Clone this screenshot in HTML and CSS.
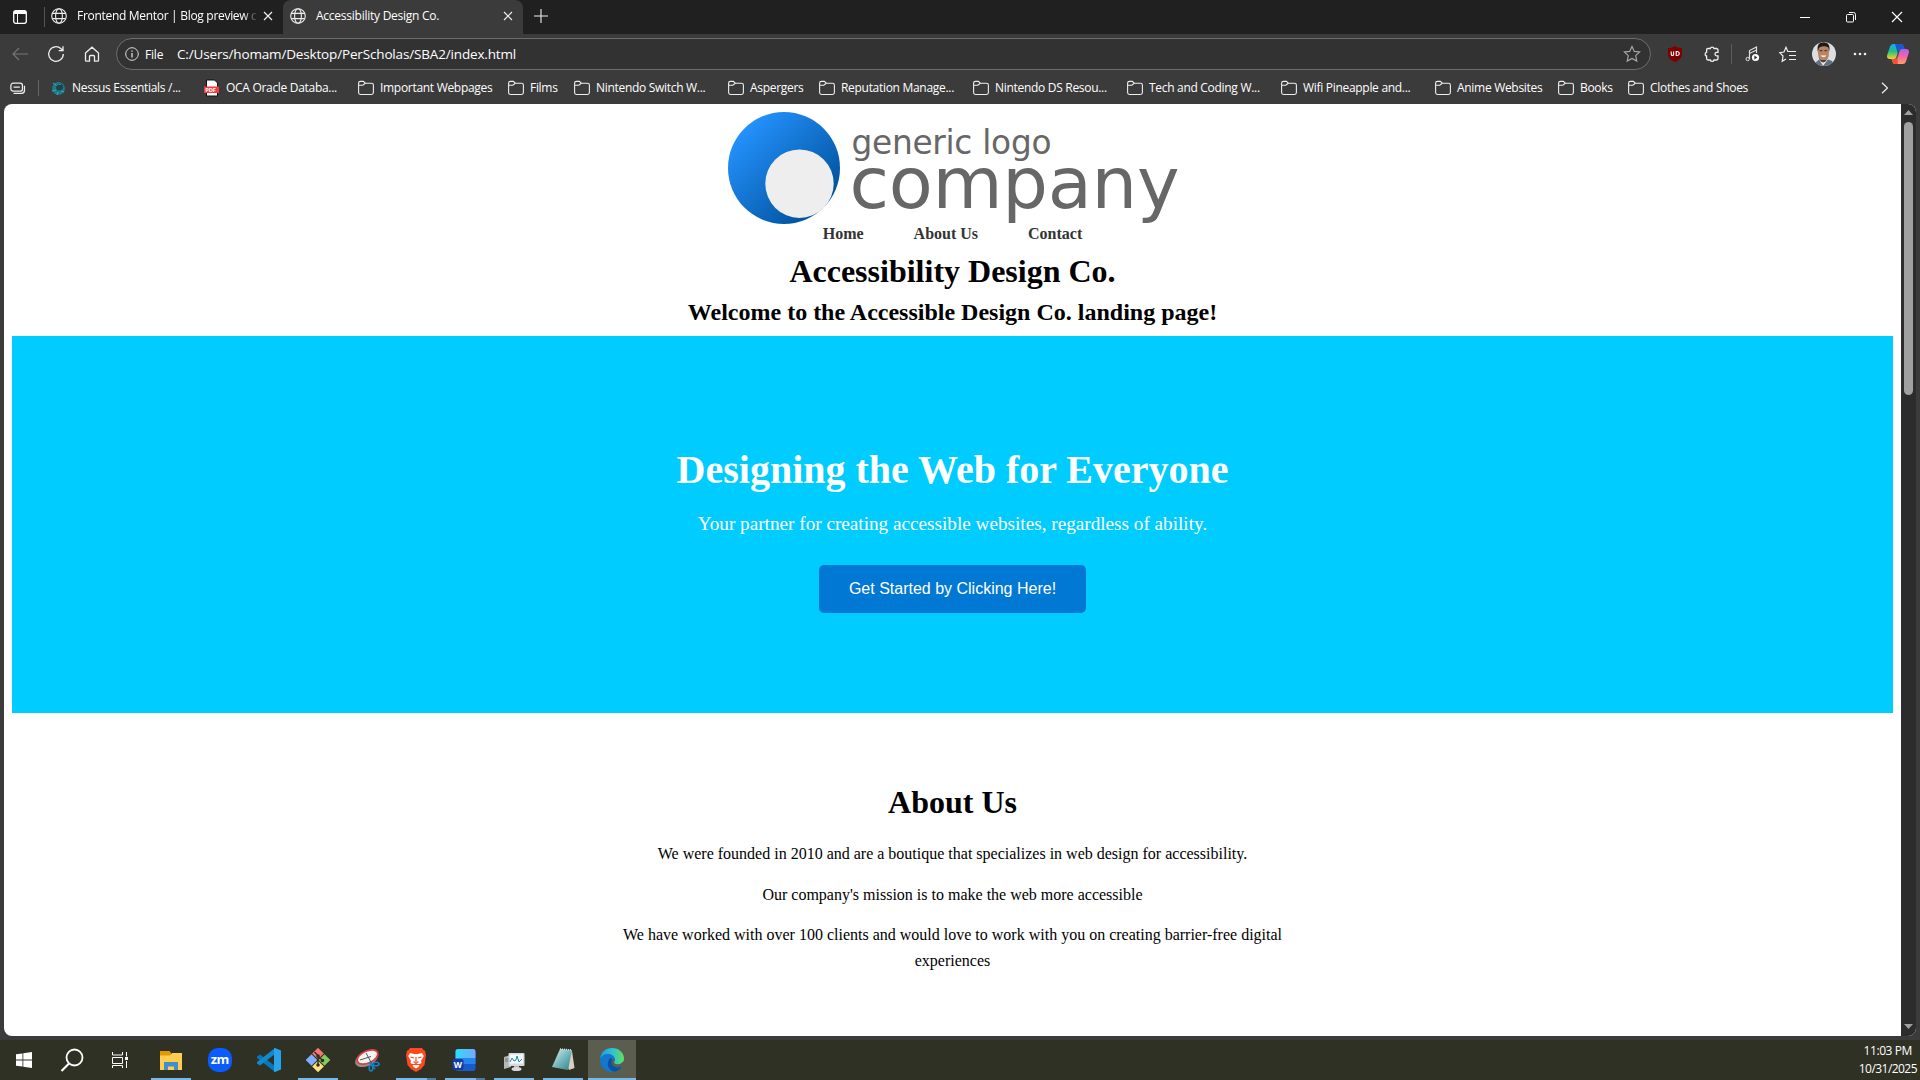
FILE: index.html
```html
<!DOCTYPE html>
<html lang="en">
<head>
<meta charset="utf-8">
<title>Accessibility Design Co.</title>
<link rel="stylesheet" href="styles.css">
</head>
<body>
<svg class="defs" width="0" height="0" aria-hidden="true">
  <symbol id="globe" viewBox="0 0 16 16"><g fill="none" stroke="#eee" stroke-width="1.1"><circle cx="8" cy="8" r="7.3"/><ellipse cx="8" cy="8" rx="3.4" ry="7.3"/><path d="M1.4 5.4h13.2M1.4 10.6h13.2"/></g></symbol>
  <symbol id="close" viewBox="0 0 10 10"><path d="M1 1l8 8M9 1l-8 8" stroke="#eee" stroke-width="1.2"/></symbol>
  <symbol id="folder" viewBox="0 0 16 16"><path d="M.6 3.2a1.8 1.8 0 0 1 1.8-1.8h3l1.9 1.8h6.200a1.900 1.900 0 0 1 1.900 1.900v7.500a1.900 1.900 0 0 1-1.900 1.900H2.500a1.900 1.900 0 0 1-1.900-1.900zM.6 5.200h4.200l2.500-2" fill="none" stroke="#eee" stroke-width="1.100"/></symbol>
</svg>
<div class="window">
  <header class="tabstrip">
    <div class="tab-actions"><svg width="14" height="14" viewBox="0 0 14 14"><rect x=".7" y=".7" width="12.600" height="12.600" rx="2" fill="none" stroke="#fff" stroke-width="1.300"/><path d="M1 1h12v3H1z" fill="#fff"/><path d="M4.500 4v9" stroke="#fff"/></svg></div>
    <div class="tab"><svg width="16" height="16"><use href="#globe"/></svg><span class="tab-title faded">Frontend Mentor | Blog preview c</span><svg width="10" height="10"><use href="#close"/></svg></div>
    <div class="tab active"><svg width="16" height="16"><use href="#globe"/></svg><span class="tab-title">Accessibility Design Co.</span><svg width="10" height="10"><use href="#close"/></svg></div>
    <div class="new-tab"><svg width="14" height="14" viewBox="0 0 14 14"><path d="M7 0v14M0 7h14" stroke="#eee" stroke-width="1.100"/></svg></div>
    <div class="window-buttons">
      <span><svg width="12" height="12"><path d="M1 6.500h10" stroke="#fff"/></svg></span>
      <span><svg width="12" height="12" fill="none" stroke="#fff"><rect x="1.500" y="3.500" width="7" height="7.500" rx="1"/><path d="M4 1.500h4.500a2 2 0 0 1 2 2V9"/></svg></span>
      <span><svg width="12" height="12"><path d="M1 1l10 10M11 1L1 11" stroke="#fff" stroke-width="1.200"/></svg></span>
    </div>
  </header>
  <div class="toolbar">
    <div class="nav-buttons">
      <span><svg width="16" height="14" fill="none" stroke="#777" stroke-width="1.100"><path d="M16 7H1M7 1L1 7l6 6"/></svg></span>
      <span><svg width="18" height="18" fill="none" stroke="#eee" stroke-width="1.300"><path d="M16.300 9A7.300 7.300 0 1 1 14 3.700L16 5.600M16 1.300v4.400h-4.300"/></svg></span>
      <span><svg width="16" height="16" fill="none" stroke="#eee" stroke-width="1.300"><path d="M1.500 7L8 1.200 14.500 7v7.200a.9.9 0 0 1-.9.900H10.500V10.500a1 1 0 0 0-1-1h-3a1 1 0 0 0-1 1V15.100H2.400a.9.9 0 0 1-.9-.9z"/></svg></span>
    </div>
    <div class="omnibox">
      <svg width="14" height="14" fill="none" stroke="#ddd"><circle cx="7" cy="7" r="6.300"/><path d="M7 6v4.500M7 3.500v1.300" stroke-width="1.300"/></svg>
      <span class="scheme">File</span>
      <span class="url">C:/Users/homam/Desktop/PerScholas/SBA2/index.html</span>
      <svg class="fav" width="18" height="18" viewBox="0 0 18 18" fill="none" stroke="#aaa" stroke-width="1.100"><path d="M9 1.400l2.300 5 5.400.6-4 3.700 1.100 5.400L9 13.400l-4.800 2.700 1.100-5.400-4-3.700 5.400-.6z"/></svg>
    </div>
    <div class="extensions">
      <span class="e-shield"><svg width="14" height="16"><path d="M7 0c2 1.500 4.500 2 7 2v6c0 4-3 6.500-7 8-4-1.500-7-4-7-8V2c2.500 0 5-.5 7-2z" fill="#800000"/><path d="M3.200 5.500v2.700q0 1.300 1.200 1.300t1.200-1.300V5.500M8.200 5.500v4q3 .3 3-2t-3-2z" fill="none" stroke="#fff" stroke-width="1.100"/></svg></span>
      <span class="e-puzzle"><svg width="16" height="18" fill="none" stroke="#eee" stroke-width="1.300"><path d="M4 3.500h2.300a1.900 1.900 0 0 1 3.700 0h2.500a1.500 1.500 0 0 1 1.500 1.500v2.300h-1.200a1.800 1.800 0 0 0 0 3.600H14v2.600a1.500 1.500 0 0 1-1.500 1.500H10a1.900 1.900 0 0 1-3.700 0H4A1.500 1.500 0 0 1 2.600 13.500V11a1.900 1.900 0 0 1 0-3.700V5A1.500 1.500 0 0 1 4 3.500z"/></svg></span>
      <span class="e-music"><svg width="15" height="16"><path d="M4.500 13V4.500L11.500 1v6M4.500 7.500l7-3.500" fill="none" stroke="#ddd" stroke-width="1.200"/><circle cx="2.700" cy="13" r="1.700" fill="none" stroke="#ddd"/><circle cx="10.500" cy="11.500" r="3.600" fill="#fff"/><path d="M9.400 9.500v4l3-2z" fill="#333"/></svg></span>
      <span class="e-list"><svg width="18" height="17" fill="none" stroke="#eee" stroke-width="1.200"><path d="M11 5.500H8.800L7 1.300 5 6l-4.200.6L4 10l-.8 5.300L7 13M11 5.500h6M10 9.500h7M10 13.500h7"/></svg></span>
      <span class="e-avatar"><svg width="24" height="24"><defs><clipPath id="face"><circle cx="12" cy="12" r="12"/></clipPath></defs><g clip-path="url(#face)"><path d="M0 0h24v24H0z" fill="#dcdee1"/><path d="M2 24l2-4 4-3h7l5 2 3 5z" fill="#60707f"/><path d="M7 17l4 7 6-8z" fill="#dbe8f2"/><path d="M5.800 9Q6 2 11.500 2T17 9q.3 5-1.500 8t-4.300 3q-2.700-.3-4-3.500T5.800 9z" fill="#b98366"/><path d="M5.800 9.500C4.800 3 7 .3 11.500.3S18.500 3 17.200 9.500L16.300 5.500Q12 3 7 5.700z" fill="#211b18"/><path d="M7.700 8.700h2.600M12.500 8.700h2.600" stroke="#3b261d"/><path d="M6.200 12.500q.8 7 5 8 4-.8 5.300-8-.8 5-2.500 5.500h-5q-2-1-2.800-5.500z" fill="#5c3b2d"/><path d="M8.500 13.500q3 3.500 6 0z" fill="#fff"/></g></svg></span>
      <span class="e-dots"><svg width="14" height="4" fill="#eee"><circle cx="2" cy="2" r="1.300"/><circle cx="7" cy="2" r="1.300"/><circle cx="12" cy="2" r="1.300"/></svg></span>
      <span class="e-copilot"><svg width="22" height="20" viewBox="0 0 22 20"><defs><linearGradient id="cpa" x1="0" y1="0" x2="0" y2="1"><stop offset="0" stop-color="#17a8f5"/><stop offset=".5" stop-color="#22bf86"/><stop offset="1" stop-color="#f7d51d"/></linearGradient><linearGradient id="cpb" x1="0" y1="0" x2="0" y2="1"><stop offset="0" stop-color="#b25df0"/><stop offset=".5" stop-color="#f366a7"/><stop offset="1" stop-color="#ffa05c"/></linearGradient></defs><path d="M6 0h8q2 0 2.700 2.500L17.500 5H14q-2 0-2.700 2L9.500 13Q8.700 15 7 15H3Q-.8 15 .2 11L3 2.500Q4 0 6 0z" fill="url(#cpa)"/><path d="M8 0h6q2 0 2.700 2.500L17.500 5H14q-2 0-2.700 2L10.700 9z" fill="#1857cf"/><path d="M16 20H8q-2 0-2.700-2.500L4.500 15H8q2 0 2.700-2L12.500 7Q13.300 5 15 5h4q3.800 0 2.800 4L19 17.500Q18 20 16 20z" fill="url(#cpb)"/><path d="M4.500 15H8q2 0 2.700-2v7H8q-2 0-2.700-2.500z" fill="#f2503d"/></svg></span>
    </div>
  </div>
  <nav class="bookmarks">
    <div class="collapse"><svg width="16" height="13" viewBox="0 0 18 14" fill="none" stroke="#eee" stroke-width="1.400"><rect x="1" y="1" width="13" height="9" rx="2.500"/><path d="M4 5.500h7M4 12.500h9q3.300 0 3.300-3.500V4"/></svg></div>
    <a class="b-nessus"><svg width="15" height="16"><circle cx="7.500" cy="8.500" r="6.500" fill="#187c8b"/><circle cx="8.500" cy="7" r="3.500" fill="#24404a"/><path d="M2 3l3 2M1 11l4-1M6 15l1-3M13 12l-3-1" stroke="#44a7af"/><path d="M5 6q2-3 5-1.500" fill="none" stroke="#2a96a2"/></svg>Nessus Essentials /...</a>
    <a class="b-oca"><svg width="15" height="16"><path d="M2.500 0h8l3 3v13h-11z" fill="#fff" stroke="#111"/><path d="M0 6.500h15v6.500H0z" fill="#f13d3d"/><text x="1.300" y="12" font-size="5.800" font-weight="700" fill="#fff">PDF</text></svg>OCA Oracle Databa...</a>
    <a class="b-important"><svg width="16" height="16"><use href="#folder"/></svg>Important Webpages</a>
    <a class="b-films"><svg width="16" height="16"><use href="#folder"/></svg>Films</a>
    <a class="b-switch"><svg width="16" height="16"><use href="#folder"/></svg>Nintendo Switch W...</a>
    <a class="b-asp"><svg width="16" height="16"><use href="#folder"/></svg>Aspergers</a>
    <a class="b-rep"><svg width="16" height="16"><use href="#folder"/></svg>Reputation Manage...</a>
    <a class="b-ds"><svg width="16" height="16"><use href="#folder"/></svg>Nintendo DS Resou...</a>
    <a class="b-tech"><svg width="16" height="16"><use href="#folder"/></svg>Tech and Coding W...</a>
    <a class="b-wifi"><svg width="16" height="16"><use href="#folder"/></svg>Wifi Pineapple and...</a>
    <a class="b-anime"><svg width="16" height="16"><use href="#folder"/></svg>Anime Websites</a>
    <a class="b-books"><svg width="16" height="16"><use href="#folder"/></svg>Books</a>
    <a class="b-clothes"><svg width="16" height="16"><use href="#folder"/></svg>Clothes and Shoes</a>
    <div class="more"><svg width="8" height="12" fill="none" stroke="#eee" stroke-width="1.200"><path d="M1 .7L6.500 6 1 11.300"/></svg></div>
  </nav>
  <div class="viewport">
    <main class="page">
      <div class="logo">
        <svg width="450" height="116" viewBox="0 0 450 116"><defs><linearGradient id="disc" x1=".15" y1=".15" x2=".85" y2=".85"><stop offset="0" stop-color="#2491fc"/><stop offset="1" stop-color="#00529c"/></linearGradient></defs><circle cx="56" cy="56" r="56" fill="url(#disc)"/><circle cx="71.500" cy="71.700" r="34.200" fill="#eee"/><text x="123.500" y="41.700" font-size="32.800" textLength="200">generic logo</text><text x="121.500" y="95.500" font-size="72" textLength="330">company</text></svg>
      </div>
      <nav class="site-nav"><a>Home</a><a>About Us</a><a>Contact</a></nav>
      <h1>Accessibility Design Co.</h1>
      <h2>Welcome to the Accessible Design Co. landing page!</h2>
      <section class="hero">
        <h1>Designing the Web for Everyone</h1>
        <p>Your partner for creating accessible websites, regardless of ability.</p>
        <button>Get Started by Clicking Here!</button>
      </section>
      <section class="about">
        <h2>About Us</h2>
        <p>We were founded in 2010 and are a boutique that specializes in web design for accessibility.</p>
        <p>Our company's mission is to make the web more accessible</p>
        <p>We have worked with over 100 clients and would love to work with you on creating barrier-free digital experiences</p>
      </section>
    </main>
    <div class="scrollbar"><svg width="9" height="6"><path d="M0 5L4.500 0 9 5z" fill="#a0a0a0"/></svg><div class="thumb"></div><svg class="down" width="9" height="6"><path d="M0 0L4.500 5 9 0z" fill="#a0a0a0"/></svg></div>
  </div>
</div>
<footer class="taskbar">
  <div class="system-icons">
    <span><svg width="16" height="16" fill="#fff"><path d="M0 2.300L6.500 1.400v6.200H0zM7.300 1.300L16 0v7.600H7.300zM0 8.400h6.500v6.200L0 13.700zM7.300 8.400H16V16l-8.700-1.300z"/></svg></span>
    <span><svg width="24" height="24" fill="none" stroke="#fff" stroke-width="1.800"><circle cx="14.500" cy="9.500" r="8"/><path d="M9 15.500L1.500 23" stroke-width="2.200"/></svg></span>
    <span><svg width="16" height="16" fill="none" stroke="#fff"><path d="M.5 0v3h10V0M.5 5.500h10v6H.5zM.5 16v-2.500h10V16M14.500 0v4.500M14.500 9v7"/><path d="M13 5h3v3h-3z" fill="#fff" stroke="none"/></svg></span>
  </div>
  <div class="apps">
    <span class="open"><svg width="24" height="24"><path d="M1 3h9.500L12 5v6H1z" fill="#e09a00"/><path d="M1 7.500h10L13 5h10v17H1z" fill="#ffce50"/><path d="M5 22v-8h14v8h-4v-3.500H9V22z" fill="#3e8ed0"/></svg></span>
    <span><svg width="24" height="24"><rect width="24" height="24" rx="10" fill="#0b5cff"/><text class="zm" x="2.800" y="16" font-size="13" font-weight="700" textLength="18.500" fill="#fff">zm</text></svg></span>
    <span><svg width="24" height="24"><path d="M0 8.500l3-2L18 18v6L0 10z" fill="#0878bd"/><path d="M0 15.500l3 2L18 6V0L0 14z" fill="#118acb"/><path d="M18 0l6 2.500v19L18 24l-1-.5V.5z" fill="#28a4ed"/></svg></span>
    <span class="open"><svg width="24" height="24"><g transform="rotate(45 12 12)"><path d="M3.300 3.300h8.200v8.200H3.300z" fill="#f67575"/><path d="M12.500 3.300h8.200v8.200h-8.200z" fill="#80cc5c"/><path d="M3.300 12.500h8.200v8.200H3.300z" fill="#80b0ff"/><path d="M12.500 12.500h8.200v8.200h-8.200z" fill="#ffe27b"/></g><path d="M8.500 4l3.500 3.500v9M12 8l4.500 4.500" fill="none" stroke="#352a24" stroke-width="1.400"/><g fill="#352a24"><circle cx="12" cy="8" r="1.800"/><circle cx="16.500" cy="12.500" r="1.800"/><circle cx="12" cy="17" r="1.800"/></g></svg></span>
    <span><svg width="24" height="24"><ellipse cx="11.500" cy="11" rx="12" ry="7" transform="rotate(-24 11.500 11)" fill="#938e8a"/><ellipse cx="12.500" cy="9" rx="11" ry="6" transform="rotate(-24 12.500 9)" fill="#f6f4f3" stroke="#dc3c42" stroke-width="1.700"/><path d="M5 12l11-3.500M11 5l6 11" stroke="#555"/><g fill="none" stroke="#1683c6" stroke-width="1.600"><ellipse cx="21" cy="16" rx="3" ry="1.800"/><ellipse cx="16" cy="20" rx="1.800" ry="3"/><path d="M14 14l6 7"/></g></svg></span>
    <span class="open multi"><svg width="24" height="24"><path d="M6 0h12l2 2.500h1L22 7l-1.500 10L17 21l-5 3-5-3-3.500-4L2 7l1-4.500h1z" fill="#fb4a1d"/><path d="M6 5l4 1h4l4-1 1.800 3-2.800 5 .5 2-3 1.500 1 1.500-3.500 2.500L8.500 18l1-1.500-3-1.500.5-2-2.800-5z" fill="#fff"/><path d="M6.500 9l3.500 1M17.500 9L14 10M12 9v5M9.500 13.500L12 15.500l2.500-2M8.500 16.500h7" fill="none" stroke="#fb4a1d" stroke-width="1.200"/></svg></span>
    <span class="open multi"><svg width="24" height="24"><defs><linearGradient id="wd" x1="0" x2="1"><stop offset="0" stop-color="#28ddff"/><stop offset="1" stop-color="#7ba5fa"/></linearGradient></defs><rect x="2.500" y="1" width="20" height="22" rx="2.500" fill="#165dc9"/><path d="M2.500 10V3.500A2.500 2.500 0 0 1 5 1h15a2.500 2.500 0 0 1 2.500 2.500V10z" fill="url(#wd)"/><path d="M2.500 10h20v6h-20z" fill="#2784ec"/><rect x="-.5" y="11" width="11" height="11" rx="2" fill="#123ca5"/><text x=".7" y="19.800" font-size="8.500" font-weight="700" fill="#fff">W</text></svg></span>
    <span class="open"><svg width="24" height="24"><path d="M2 9l7-2v12l-7 2z" fill="#b7b8b6"/><path d="M3 11h5M3 13h5" stroke="#777"/><rect x="6.500" y="5" width="16" height="13" rx="1" fill="#d6dadb"/><path d="M8 6.500h13v9H8z" fill="#f3fbff"/><path d="M8 14l2-4 2 3 2-1 1-4 2 6 3-3" fill="none" stroke="#2488bd"/><path d="M12 18h5v3h-5z" fill="#b5b5b5"/><ellipse cx="14.500" cy="21" rx="5" ry="2" fill="#d9d9d9"/></svg></span>
    <span class="open"><svg width="24" height="24"><defs><linearGradient id="np" x1="0" y1="0" x2="1" y2="1"><stop offset="0" stop-color="#dff1f1"/><stop offset=".5" stop-color="#77b9bf"/><stop offset="1" stop-color="#29818c"/></linearGradient></defs><path d="M9 2l12 1 2.500 17L18 22z" fill="#d6d0bd"/><path d="M9 1l12 1-4 20L1 19z" fill="url(#np)"/><path d="M9 1l12 1" stroke="#ddd" stroke-width="1.500" stroke-dasharray="1 1"/></svg></span>
    <span class="open current"><svg width="24" height="24"><defs><linearGradient id="eg" x1="0" x2="1"><stop offset="0" stop-color="#219cdb"/><stop offset=".55" stop-color="#32c4cb"/><stop offset="1" stop-color="#65df57"/></linearGradient></defs><circle cx="12" cy="12" r="12" fill="#1178cc"/><path d="M.2 10.500C1 4 6 0 12 0c7 0 12 5 12 10.500 0 4-3 6-6 6-2.500 0-4-1-4-2 0-.8 1-1.300 1-3C15 8.500 12 6 8 6 4 6 1.500 8 .2 10.500z" fill="url(#eg)"/><path d="M9.500 11c-4 5-.5 12 5 12.700 3.500-.7 6-2.700 7.300-5.200-5.500 2.300-10-.5-10-4.500 0-1.500 0-2 .7-3-1-1-2-.8-3 0z" fill="#0b51a2"/><path d="M14 14.500c.5 2 3.500 2.500 6 1.500l4.200-3v5l-2.400.5c-5 2-10 0-10-4.500 0-1.500 0-2 .8-3 2-1 2 1 1.400 3.500z" fill="#5b5e4e"/></svg></span>
  </div>
  <div class="clock"><span>11:03 PM</span><span>10/31/2025</span></div>
</footer>
</body>
</html>
```
FILE: styles.css
```css
* { box-sizing: border-box; }
body { margin: 0; width: 1920px; height: 1080px; overflow: hidden; background: #3b3b3b; font-family: "Open Sans", sans-serif; font-size: 12px; color: #fff; }
svg { display: block; flex: none; overflow: visible; }
.defs { position: absolute; }
h1, h2, p { margin: 0; }
.window { height: 1040px; display: flex; flex-direction: column; background: #3b3b3b; }

.tabstrip { height: 34px; flex: none; display: flex; background: #202020; }
.tab-actions { width: 45px; margin: 7px 0 7px; padding-left: 13px; display: flex; align-items: center; border-right: 1px solid #555; height: 20px; }
.tab { display: flex; align-items: center; width: 238px; padding: 0 10px 2px 6px; gap: 10px; }
.tab-title { flex: 1; white-space: nowrap; letter-spacing: -.25px; padding-bottom: 1px; }
.tab .faded { flex: none; width: 179px; margin-right: -3px; letter-spacing: -.3px; mask-image: linear-gradient(90deg, #000 166px, transparent 181px); }
.tab.active { width: 240px; padding-left: 7px; background: #3b3b3b; border-radius: 8px 8px 0 0; }
.new-tab { width: 34px; padding: 9px 0 0 11px; }
.window-buttons { margin-left: auto; display: flex; }
.window-buttons span { width: 46px; height: 34px; display: grid; place-items: center; }

.toolbar { height: 40px; flex: none; display: flex; align-items: center; }
.nav-buttons { display: flex; width: 116px; padding-left: 2px; }
.nav-buttons span { width: 36px; display: grid; place-items: center; }
.omnibox { width: 1535px; height: 32px; border: 1px solid #6d6d6d; border-radius: 16px; background: #323232; display: flex; align-items: center; padding: 0 9px 0 8px; }
.scheme { width: 32px; margin-left: 6px; letter-spacing: -.2px; }
.url { font-size: 13.500px; letter-spacing: -.160px; }
.fav { margin-left: auto; }
.extensions { display: flex; align-items: center; height: 24px; }
.extensions span { display: grid; place-items: center; height: 20px; }
.extensions .e-shield { width: 48px; }
.extensions .e-puzzle { width: 33px; padding-right: 7px; border-right: 1px solid #5c5c5c; }
.extensions .e-music { width: 41px; }
.extensions .e-list { width: 29px; }
.extensions .e-avatar { width: 43px; height: 24px; }
.extensions .e-dots { width: 30px; }
.extensions .e-copilot { width: 45px; }

.bookmarks { height: 30px; flex: none; display: flex; align-items: center; padding-bottom: 3px; letter-spacing: -.3px; }
.bookmarks a { display: flex; align-items: center; gap: 6px; white-space: nowrap; }
.collapse { width: 39px; height: 16px; margin-right: 12px; padding: 2px 0 0 10px; border-right: 1px solid #666; }
.bookmarks .b-nessus { width: 153px; }
.bookmarks .b-oca, .bookmarks .b-switch, .bookmarks .b-rep, .bookmarks .b-ds, .bookmarks .b-tech, .bookmarks .b-wifi { width: 154px; }
.bookmarks .b-oca { gap: 7px; }
.bookmarks .b-important { width: 150px; }
.bookmarks .b-films { width: 66px; }
.bookmarks .b-asp { width: 91px; }
.bookmarks .b-anime { width: 123px; }
.bookmarks .b-books { width: 70px; }
.more { margin: 0 31px 0 auto; }

.viewport { display: flex; height: 932px; margin: 0 4px; border-radius: 8px; overflow: hidden; background: #fff; }
.page { width: 1897px; padding: 8px; color: #000; font-family: "Liberation Serif", serif; text-align: center; }
.logo { height: 113px; display: flex; justify-content: center; }
.logo text { font-family: "DejaVu Sans", sans-serif; fill: #676767; }
.site-nav { height: 18px; display: flex; justify-content: center; gap: 50px; font-size: 16px; font-weight: 700; line-height: 18px; color: #333; }
.page > h1 { margin: 10px 0 9px; font-size: 32px; line-height: 36px; }
.page > h2 { margin-bottom: 10px; font-size: 24px; line-height: 28px; }
.hero { padding: 112px 0 100px; background: #0cf; color: #fff; }
.hero h1 { font-size: 40px; line-height: 44px; margin-bottom: 17px; }
.hero p { font-size: 19.200px; line-height: 30px; margin-bottom: 26px; }
.hero button { display: block; width: 267px; height: 48px; margin: 0 auto; padding: 0; border: 0; border-radius: 5px; background: #0078d4; color: #fff; font: 16px "Liberation Sans", sans-serif; }
.about { width: 700px; margin: 71px auto 0; }
.about h2 { margin-bottom: 21px; font-size: 32px; line-height: 36px; }
.about p { margin-bottom: 15px; font-size: 16px; line-height: 25.600px; }
.scrollbar { width: 15px; background: #2c2c2c; display: flex; flex-direction: column; align-items: center; padding: 6px 0 6px; }
.thumb { width: 9px; height: 273px; margin-top: 6px; border-radius: 5px; background: #a0a0a0; }
.down { margin-top: auto; }

.taskbar { height: 40px; display: flex; background: #2f3124; }
.system-icons { display: flex; width: 147px; }
.system-icons span { width: 48px; height: 40px; display: grid; place-items: center; }
.apps { display: flex; gap: 1px; }
.apps span { width: 48px; height: 40px; display: grid; place-items: center; }
.apps .open { background: linear-gradient(#76b9ed, #76b9ed) 4px 38px / 40px 2px no-repeat; }
.apps .multi { background: linear-gradient(90deg, #76b9ed 31px, #507ba0 31px) 4px 38px / 40px 2px no-repeat; }
.apps .current { background: linear-gradient(#76b9ed, #76b9ed) 0 38px / 48px 2px no-repeat #5b5e4e; }
.zm { font-family: "Open Sans", sans-serif; }
.clock { margin-left: auto; padding: 2px 3px 0 0; display: flex; flex-direction: column; text-align: right; line-height: 18px; letter-spacing: -.550px; }
.clock span:first-child { padding-right: 5px; letter-spacing: -.4px; }
```
